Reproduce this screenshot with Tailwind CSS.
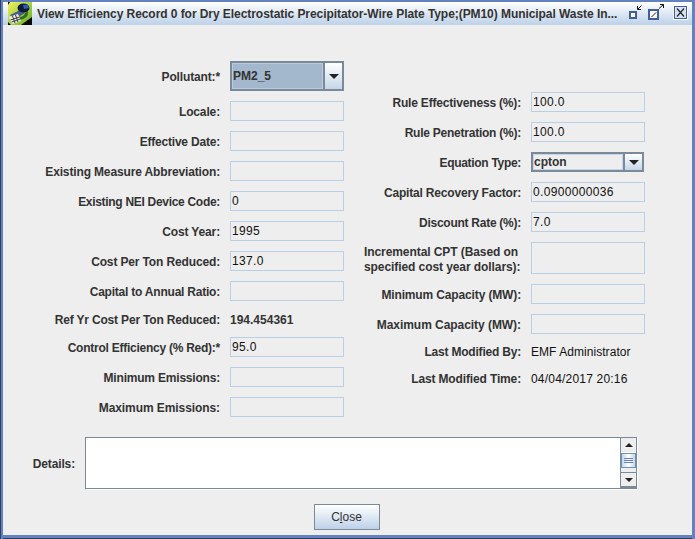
<!doctype html>
<html lang="en">
  <head>
    <meta charset="UTF-8" />
    <title>View Efficiency Record</title>
    <script src="https://cdn.jsdelivr.net/npm/@tailwindcss/browser@4"></script>
  </head>
  <body class="bg-[#6382bf] font-['Liberation_Sans',Arial,sans-serif] text-[12px] text-[#333333]">
    <div class="w-[695px] h-[539px] flex flex-col overflow-hidden border-l border-[#2f3f5f] pl-[2px] pr-[3px] pt-[2px]">
      <!-- Title bar -->
      <div class="h-[23px] pl-[5px] flex items-center bg-gradient-to-b from-white to-[#bdd1e8] shrink-0">
        <svg width="24" height="23" viewBox="0 0 24 23" class="shrink-0">
          <defs>
            <linearGradient id="lime" x1="0" y1="0" x2="1" y2="1">
              <stop offset="0" stop-color="#f4f25c" />
              <stop offset="1" stop-color="#5fae2c" />
            </linearGradient>
          </defs>
          <rect width="24" height="23" fill="url(#lime)" />
          <path d="M0 0 H2 L0 3 Z M0 20 L3 23 H0 Z M13 23 L24 15 V23 Z" fill="#0b0b0b" />
          <path d="M11 18 Q21 17 20 9 L17 11 Q16 15 11 15 Z" fill="#2f6e1d" />
          <path d="M2 13 L14 7 L17 11 L6 18 Z" fill="#4a5f8c" />
          <ellipse cx="15.500" cy="6" rx="6" ry="4.500" fill="#0e1c3a" />
          <path d="M15 3 L20 2.500 L21 6 L16 7 Z" fill="#2d5fb0" />
          <path d="M1 15 L10 12 L13 19 L4 22 Z" fill="#ececec" />
          <path d="M2.500 18 L11.500 15 M3.500 20 L12.500 17 M4.500 14 L7 21 M7.500 13 L10 20" stroke="#3a3a3a" stroke-width="1" />
        </svg>
        <div class="ml-[5px] font-bold whitespace-nowrap tracking-[-0.06px] w-[591px] min-w-0 shrink-0">View Efficiency Record 0 for Dry Electrostatic Precipitator-Wire Plate Type;(PM10) Municipal Waste In...</div>
        <svg width="62" height="23" viewBox="0 0 62 23" class="shrink-0">
          <rect x="2" y="10" width="6" height="6" fill="#fff" stroke="#3f5f9f" stroke-width="2" />
          <path d="M13.500 3.500 L10 7 M9.500 4 V7.500 H13" stroke="#111" fill="none" />
          <rect x="21" y="8" width="9" height="9" fill="#fff" stroke="#3f5f9f" stroke-width="2" />
          <path d="M23.500 15 L28 10.500" stroke="#222" />
          <path d="M31 6.500 L35.500 2.500 M32 2.500 H35.500 V6" stroke="#111" fill="none" />
          <rect x="45" y="3" width="15" height="15" fill="#fff" />
          <rect x="46.500" y="4.500" width="12" height="12" fill="#d5e2f1" stroke="#3f5f9f" />
          <path d="M49 6.500 L56 14.500 M56 6.500 L49 14.500" stroke="#222" stroke-width="1.200" />
        </svg>
      </div>

      <!-- Form -->
      <div class="flex-1 bg-[#eeeeee] relative flex flex-col">
        <div class="flex pt-[36px] h-[412px]">
          <!-- Left column -->
          <div class="w-[341px] flex flex-col shrink-0">
            <div class="flex items-center h-[30px]">
              <div class="w-[217px] pt-[2px] text-right font-bold tracking-[-0.14px]">Pollutant:*</div>
              <div class="ml-[10px] w-[114px] h-[30px] flex border-2 border-[#7a8a99] bg-[#a3b8cc]">
                <div class="flex-1 border border-[#b8cce0] flex items-center font-bold text-[#333]">PM2_5</div>
                <div class="w-[19px] border-l-2 border-[#7a8a99] bg-gradient-to-b from-white to-[#c5d6e8] flex items-center justify-center">
                  <div class="w-0 h-0 border-l-[5px] border-r-[5px] border-t-[5px] border-l-transparent border-r-transparent border-t-[#222]"></div>
                </div>
              </div>
            </div>
            <div class="flex flex-col gap-[10px] mt-[10px]">
              <div class="flex items-center h-[20px]"><div class="w-[217px] pt-[2px] text-right font-bold tracking-[-0.14px]">Locale:</div><div class="ml-[10px] w-[114px] h-[20px] border border-[#b8cfe5] pl-[1px] flex items-center tracking-[0.33px] text-[#111]"></div></div>
              <div class="flex items-center h-[20px]"><div class="w-[217px] pt-[2px] text-right font-bold tracking-[-0.2px]">Effective Date:</div><div class="ml-[10px] w-[114px] h-[20px] border border-[#b8cfe5] pl-[1px] flex items-center tracking-[0.33px] text-[#111]"></div></div>
              <div class="flex items-center h-[20px]"><div class="w-[217px] pt-[2px] text-right font-bold tracking-[-0.14px]">Existing Measure Abbreviation:</div><div class="ml-[10px] w-[114px] h-[20px] border border-[#b8cfe5] pl-[1px] flex items-center tracking-[0.33px] text-[#111]"></div></div>
              <div class="flex items-center h-[20px]"><div class="w-[217px] pt-[2px] text-right font-bold tracking-[-0.3px]">Existing NEI Device Code:</div><div class="ml-[10px] w-[114px] h-[20px] border border-[#b8cfe5] pl-[1px] flex items-center tracking-[0.33px] text-[#111]">0</div></div>
              <div class="flex items-center h-[20px]"><div class="w-[217px] pt-[2px] text-right font-bold tracking-[-0.14px]">Cost Year:</div><div class="ml-[10px] w-[114px] h-[20px] border border-[#b8cfe5] pl-[1px] flex items-center tracking-[0.33px] text-[#111]">1995</div></div>
              <div class="flex items-center h-[20px]"><div class="w-[217px] pt-[2px] text-right font-bold tracking-[-0.14px]">Cost Per Ton Reduced:</div><div class="ml-[10px] w-[114px] h-[20px] border border-[#b8cfe5] pl-[1px] flex items-center tracking-[0.33px] text-[#111]">137.0</div></div>
              <div class="flex items-center h-[20px]"><div class="w-[217px] pt-[2px] text-right font-bold tracking-[-0.22px]">Capital to Annual Ratio:</div><div class="ml-[10px] w-[114px] h-[20px] border border-[#b8cfe5] pl-[1px] flex items-center tracking-[0.33px] text-[#111]"></div></div>
              <div class="flex items-center h-[16px] pt-[2px]"><div class="w-[217px] text-right font-bold tracking-[-0.18px]">Ref Yr Cost Per Ton Reduced:</div><div class="ml-[10px] font-bold">194.454361</div></div>
              <div class="flex items-center h-[20px]"><div class="w-[217px] pt-[2px] text-right font-bold tracking-[-0.25px]">Control Efficiency (% Red):*</div><div class="ml-[10px] w-[114px] h-[20px] border border-[#b8cfe5] pl-[1px] flex items-center tracking-[0.33px] text-[#111]">95.0</div></div>
              <div class="flex items-center h-[20px]"><div class="w-[217px] pt-[2px] text-right font-bold tracking-[-0.2px]">Minimum Emissions:</div><div class="ml-[10px] w-[114px] h-[20px] border border-[#b8cfe5] pl-[1px] flex items-center tracking-[0.33px] text-[#111]"></div></div>
              <div class="flex items-center h-[20px]"><div class="w-[217px] pt-[2px] text-right font-bold tracking-[-0.08px]">Maximum Emissions:</div><div class="ml-[10px] w-[114px] h-[20px] border border-[#b8cfe5] pl-[1px] flex items-center tracking-[0.33px] text-[#111]"></div></div>
            </div>
          </div>
          <!-- Right column -->
          <div class="flex flex-col gap-[10px] pt-[31px]">
            <div class="flex items-center h-[20px]"><div class="w-[177px] pt-[2px] text-right font-bold tracking-[-0.18px]">Rule Effectiveness (%):</div><div class="ml-[10px] w-[114px] h-[20px] border border-[#b8cfe5] pl-[1px] flex items-center tracking-[0.33px] text-[#111]">100.0</div></div>
            <div class="flex items-center h-[20px]"><div class="w-[177px] pt-[2px] text-right font-bold tracking-[-0.24px]">Rule Penetration (%):</div><div class="ml-[10px] w-[114px] h-[20px] border border-[#b8cfe5] pl-[1px] flex items-center tracking-[0.33px] text-[#111]">100.0</div></div>
            <div class="flex items-center h-[20px]">
              <div class="w-[177px] pt-[2px] text-right font-bold tracking-[-0.3px]">Equation Type:</div>
              <div class="ml-[10px] w-[113px] h-[20px] flex border-2 border-[#7a8a99] bg-[#eeeeee]">
                <div class="flex-1 border border-[#c5d6e8] flex items-center font-bold">cpton</div>
                <div class="w-[19px] border-l-2 border-[#7a8a99] bg-gradient-to-b from-white to-[#c5d6e8] flex items-center justify-center">
                  <div class="w-0 h-0 border-l-[5px] border-r-[5px] border-t-[5px] border-l-transparent border-r-transparent border-t-[#222]"></div>
                </div>
              </div>
            </div>
            <div class="flex items-center h-[20px]"><div class="w-[177px] pt-[2px] text-right font-bold tracking-[-0.18px]">Capital Recovery Factor:</div><div class="ml-[10px] w-[114px] h-[20px] border border-[#b8cfe5] pl-[1px] flex items-center tracking-[0.33px] text-[#111]">0.0900000036</div></div>
            <div class="flex items-center h-[20px]"><div class="w-[177px] pt-[2px] text-right font-bold tracking-[-0.26px]">Discount Rate (%):</div><div class="ml-[10px] w-[114px] h-[20px] border border-[#b8cfe5] pl-[1px] flex items-center tracking-[0.33px] text-[#111]">7.0</div></div>
            <div class="flex items-center h-[32px]"><div class="w-[177px] pl-[20px] pt-[3px] text-left font-bold tracking-[-0.08px] leading-[15px] whitespace-nowrap">Incremental CPT (Based on<br />specified cost year dollars):</div><div class="ml-[10px] w-[114px] h-[32px] border border-[#b8cfe5]"></div></div>
            <div class="flex items-center h-[20px]"><div class="w-[177px] pt-[2px] text-right font-bold tracking-[-0.14px]">Minimum Capacity (MW):</div><div class="ml-[10px] w-[114px] h-[20px] border border-[#b8cfe5]"></div></div>
            <div class="flex items-center h-[20px]"><div class="w-[177px] pt-[2px] text-right font-bold tracking-[-0.05px]">Maximum Capacity (MW):</div><div class="ml-[10px] w-[114px] h-[20px] border border-[#b8cfe5]"></div></div>
            <div class="flex items-center h-[16px]"><div class="w-[177px] text-right font-bold tracking-[-0.2px]">Last Modified By:</div><div class="ml-[10px] tracking-[0.05px] text-[#111]">EMF Administrator</div></div>
            <div class="flex items-center h-[16px] pt-[2px]"><div class="w-[177px] text-right font-bold tracking-[-0.14px]">Last Modified Time:</div><div class="ml-[10px] tracking-[0.2px] text-[#111]">04/04/2017 20:16</div></div>
          </div>
        </div>

        <!-- Details -->
        <div class="flex items-center h-[52px]">
          <div class="w-[72px] pt-[2px] text-right font-bold tracking-[-0.14px]">Details:</div>
          <div class="ml-[10px] w-[552px] h-[52px] flex border border-[#7a8a99] bg-white shadow-[1px_1px_0_#ffffff]">
            <div class="flex-1"></div>
            <div class="w-[16px] flex flex-col border-l border-[#7a8a99] bg-[#eeeeee]">
              <div class="h-[15px] flex items-center justify-center border-b border-white">
                <div class="w-0 h-0 border-l-[4px] border-r-[4px] border-b-[4px] border-l-transparent border-r-transparent border-b-[#222]"></div>
              </div>
              <div class="h-[15px] border border-[#6f8fbf] bg-gradient-to-r from-[#c5d6e8] via-white to-[#c5d6e8] flex flex-col items-center justify-center gap-[1px]">
                <div class="w-[9px] h-px bg-[#6382bf]"></div>
                <div class="w-[9px] h-px bg-[#6382bf]"></div>
                <div class="w-[9px] h-px bg-[#6382bf]"></div>
              </div>
              <div class="flex-1"></div>
              <div class="h-[16px] flex items-center justify-center border-t border-[#7a8a99] border-b-2">
                <div class="w-0 h-0 border-l-[4px] border-r-[4px] border-t-[4px] border-l-transparent border-r-transparent border-t-[#222]"></div>
              </div>
            </div>
          </div>
        </div>

        <!-- Close -->
        <div class="flex justify-center mt-[15px] pr-[2px]">
          <div class="w-[66px] h-[26px] border border-[#7a8a99] bg-gradient-to-b from-white to-[#bdd1e8] flex items-center justify-center">
            <span>C<span class="underline">l</span>ose</span>
          </div>
        </div>
      </div>
      <div class="h-[4px] shrink-0 bg-[#6382bf] border-b border-[#2f3f5f]"></div>
    </div>
  </body>
</html>
